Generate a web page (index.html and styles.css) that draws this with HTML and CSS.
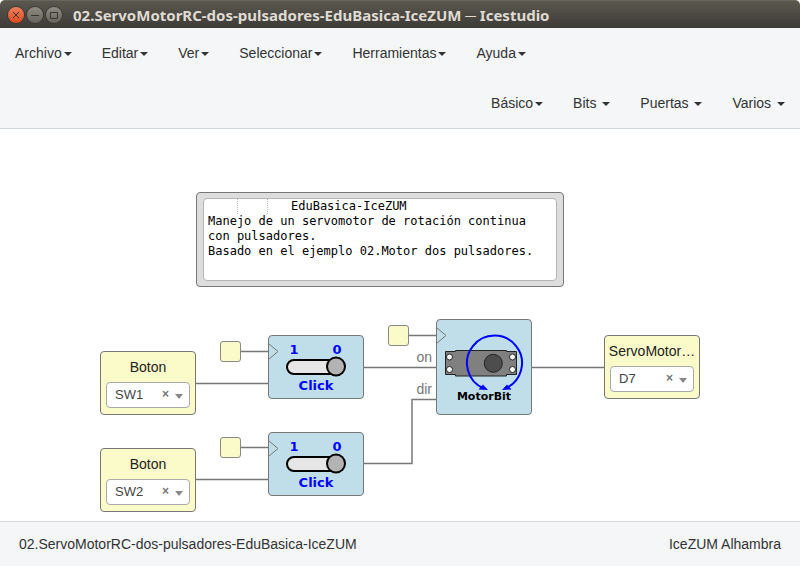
FILE: index.html
```html
<!DOCTYPE html>
<html lang="es">
<head>
<meta charset="utf-8">
<meta name="viewport" content="width=device-width, initial-scale=1">
<title>02.ServoMotorRC-dos-pulsadores-EduBasica-IceZUM ─ Icestudio</title>
<link rel="stylesheet" href="styles.css">
</head>
<body>
<header class="titlebar">
  <button class="win-btn win-close" aria-label="Cerrar"><svg viewBox="0 0 16 16"><path d="M5 5l6 6M11 5l-6 6"/></svg></button>
  <button class="win-btn" aria-label="Minimizar"><svg viewBox="0 0 16 16"><path d="M4 8.500h8"/></svg></button>
  <button class="win-btn" aria-label="Maximizar"><svg viewBox="0 0 16 16"><path d="M4.500 5.500h7v6h-7z"/></svg></button>
  <h1 class="title">02.ServoMotorRC-dos-pulsadores-EduBasica-IceZUM ─ Icestudio</h1>
</header>

<nav class="navbar">
  <div class="menu">
    <button class="menu-item">Archivo<span class="caret"></span></button>
    <button class="menu-item">Editar<span class="caret"></span></button>
    <button class="menu-item">Ver<span class="caret"></span></button>
    <button class="menu-item">Seleccionar<span class="caret"></span></button>
    <button class="menu-item">Herramientas<span class="caret"></span></button>
    <button class="menu-item">Ayuda<span class="caret"></span></button>
  </div>
  <div class="menu menu-right">
    <button class="menu-item">Básico<span class="caret"></span></button>
    <button class="menu-item">Bits <span class="caret"></span></button>
    <button class="menu-item">Puertas <span class="caret"></span></button>
    <button class="menu-item">Varios <span class="caret"></span></button>
  </div>
</nav>

<main class="canvas">
  <svg class="wires" aria-hidden="true">
    <path d="M240 222.500h28M196 254.500h72M240 318.500h28M196 350.500h72M408 206.500h28M364 238.500h72M532 238.500h72M364 334.500h48v-64h24"/>
  </svg>

  <section class="note">
    <div class="note-text"><span class="guide"></span><span class="guide"></span><span class="indent"></span>EduBasica-IceZUM
Manejo de un servomotor de rotación continua
con pulsadores.
Basado en el ejemplo 02.Motor dos pulsadores.</div>
  </section>

  <div class="port port-a"></div>
  <div class="port port-b"></div>
  <div class="port port-c"></div>

  <section class="io io-sw1">
    <label class="io-name" for="sw1">Boton</label>
    <div class="combo">
      <select id="sw1"><option>SW1</option><option>SW2</option></select>
      <button class="clear" aria-label="Borrar">×</button>
    </div>
  </section>
  <section class="io io-sw2">
    <label class="io-name" for="sw2">Boton</label>
    <div class="combo">
      <select id="sw2"><option>SW2</option><option>SW1</option></select>
      <button class="clear" aria-label="Borrar">×</button>
    </div>
  </section>
  <section class="io io-servo">
    <label class="io-name" for="servo">ServoMotor…</label>
    <div class="combo">
      <select id="servo"><option>D7</option></select>
      <button class="clear" aria-label="Borrar">×</button>
    </div>
  </section>

  <section class="block click-a">
    <svg viewBox="0 0 94 62">
      <path class="clock" d="M0 8l9 7.500l-9 7.500"/>
      <rect class="track" x="18" y="24" width="56" height="14" rx="7"/>
      <circle class="thumb" cx="67" cy="30.500" r="9"/>
      <text class="blue" x="25" y="18">1</text>
      <text class="blue" x="68" y="18">0</text>
      <text class="blue" x="47" y="54">Click</text>
    </svg>
  </section>
  <section class="block click-b">
    <svg viewBox="0 0 94 62">
      <path class="clock" d="M0 8l9 7.500l-9 7.500"/>
      <rect class="track" x="18" y="24" width="56" height="14" rx="7"/>
      <circle class="thumb" cx="67" cy="30.500" r="9"/>
      <text class="blue" x="25" y="18">1</text>
      <text class="blue" x="68" y="18">0</text>
      <text class="blue" x="47" y="54">Click</text>
    </svg>
  </section>
  <section class="block motor">
    <svg viewBox="0 0 94 94">
      <path class="clock" d="M0 8l9 7.500l-9 7.500"/>
      <path class="servo" d="M8.500 31.500h10v-1h51v1h10v23h-10v1.500h-51v-1.500h-10z"/>
      <g class="hole">
        <circle cx="12.500" cy="37" r="3"/><circle cx="75.500" cy="37" r="3"/>
        <circle cx="12.500" cy="49.500" r="3"/><circle cx="75.500" cy="49.500" r="3"/>
      </g>
      <circle class="shaft" cx="56.300" cy="43.300" r="9"/>
      <path class="turn" d="M47 68.500A27.500 27.500 0 1 1 68 68.500"/>
      <path class="head" d="M51 70l-9.500-.5l4.500-5zM65 70l9.500-.5l-4.500-5z"/>
      <text class="name" x="47" y="80">MotorBit</text>
    </svg>
  </section>
  <span class="pin pin-on">on</span>
  <span class="pin pin-dir">dir</span>
</main>

<footer class="footer">
  <span>02.ServoMotorRC-dos-pulsadores-EduBasica-IceZUM</span>
  <span>IceZUM Alhambra</span>
</footer>
</body>
</html>
```
FILE: styles.css
```css
* { box-sizing: border-box; }

body {
  margin: 0;
  min-height: 100vh;
  display: flex;
  flex-direction: column;
  background: #fff;
  color: #333;
  font: 14px/20px "Liberation Sans", Arial, sans-serif;
}

button {
  margin: 0;
  padding: 0;
  border: 0;
  background: none;
  color: inherit;
  font: inherit;
}

/* Window title bar */
.titlebar {
  height: 28px;
  padding: 0 8px;
  display: flex;
  align-items: center;
  gap: 3px;
  background: linear-gradient(#5a574e, #3e3c37);
  border-top: 1px solid #68655c;
  border-radius: 5px 5px 0 0;
}
.win-btn {
  flex: none;
  width: 16px;
  height: 16px;
  border-radius: 50%;
  background: linear-gradient(#8f8c84, #66635b);
  box-shadow: 0 0 0 1px #3a3833;
}
.win-close { background: linear-gradient(#f37f5c, #dd4a1c); }
.win-btn svg {
  display: block;
  width: 16px;
  height: 16px;
  fill: none;
  stroke: #38352f;
}
.title {
  margin: 0 0 0 8px;
  color: #dfdbd2;
  font: bold 15px/20px "Noto Sans", sans-serif;
  white-space: nowrap;
}

/* Menus */
.navbar {
  background: #f4f6f8;
  border-bottom: 1px solid #d3dadf;
}
.menu { display: flex; }
.menu-right { justify-content: flex-end; }
.menu-item {
  padding: 15px;
  white-space: pre;
}
.caret {
  display: inline-block;
  margin-left: 2px;
  vertical-align: middle;
  border: 4px solid transparent;
  border-top-color: #333;
  border-bottom: 0;
}

/* Design canvas */
.canvas {
  position: relative;
  flex: 1;
  min-height: 392px;
  overflow: hidden;
}
.wires {
  position: absolute;
  inset: 0;
  width: 100%;
  height: 100%;
  fill: none;
  stroke: #777;
  stroke-width: 1.5;
}
.note, .port, .io, .block, .pin { position: absolute; }

.note {
  left: 196px;
  top: 63px;
  width: 368px;
  height: 95px;
  padding: 5px 6px;
  background: #ddd;
  border: 1px solid #777;
  border-radius: 4px;
}
.note-text {
  height: 100%;
  padding: 0 4px;
  background: #fff;
  border: 1px solid #b5b5b5;
  border-radius: 4px;
  color: #000;
  font: 12px/15px "DejaVu Sans Mono", monospace;
  white-space: pre;
}
.guide, .indent {
  display: inline-block;
  height: 15px;
  vertical-align: top;
}
.guide {
  width: 30px;
  border-right: 1px dotted #bbb;
}
.indent { width: 23px; }

.port {
  width: 21px;
  height: 21px;
  background: #fbfac9;
  border: 1px solid #888;
  border-radius: 3px;
}
.port-a { left: 220px; top: 212px; }
.port-b { left: 388px; top: 196px; }
.port-c { left: 220px; top: 308px; }

.io {
  width: 96px;
  height: 64px;
  padding: 5px;
  background: #fbfac9;
  border: 1px solid #777;
  border-radius: 4px;
}
.io-sw1 { left: 100px; top: 222px; }
.io-sw2 { left: 100px; top: 319px; }
.io-servo { left: 604px; top: 206px; }
.io-name {
  display: block;
  margin: 0 -2px 5px;
  color: #222;
  text-align: center;
  white-space: nowrap;
}
.combo { position: relative; }
.combo::after {
  content: "";
  position: absolute;
  right: 7px;
  top: 12px;
  border: 4px solid transparent;
  border-top: 5px solid #888;
  border-bottom: 0;
  pointer-events: none;
}
.combo select {
  display: block;
  width: 100%;
  height: 26px;
  padding: 0 8px;
  appearance: none;
  background: #fff;
  border: 1px solid #aaa;
  border-radius: 4px;
  color: #444;
  font: 13px/24px "Liberation Sans", Arial, sans-serif;
}
.clear {
  position: absolute;
  right: 21px;
  top: 2px;
  color: #777;
  font-size: 12px;
  font-weight: bold;
}

.block {
  width: 96px;
  background: #c0deea;
  border: 1px solid #777;
  border-radius: 4px;
}
.block svg { display: block; width: 100%; }
.click-a { left: 268px; top: 206px; }
.click-b { left: 268px; top: 303px; }
.motor { left: 436px; top: 190px; }

.clock { fill: none; stroke: #777; }
.track { fill: #e6e6e6; stroke: #000; stroke-width: 2; }
.thumb { fill: #b3b3b3; stroke: #000; stroke-width: 2; }
.block text {
  font-family: "DejaVu Sans", sans-serif;
  font-weight: bold;
  text-anchor: middle;
}
.blue { fill: #00f; font-size: 13px; }
.name { fill: #000; font-size: 11px; }
.servo { fill: #808080; stroke: #222; }
.hole { fill: #fff; stroke: #222; }
.shaft { fill: #4d4d4d; stroke: #222; }
.turn { fill: none; stroke: #00f; stroke-width: 2; }
.head { fill: #00f; }

.pin { right: calc(100% - 432px); color: #777; }
.pin-on { top: 218px; }
.pin-dir { top: 250px; }

/* Status bar */
.footer {
  padding: 12px 19px;
  display: flex;
  justify-content: space-between;
  background: #f4f6f8;
  border-top: 1px solid #d3dadf;
}
```
